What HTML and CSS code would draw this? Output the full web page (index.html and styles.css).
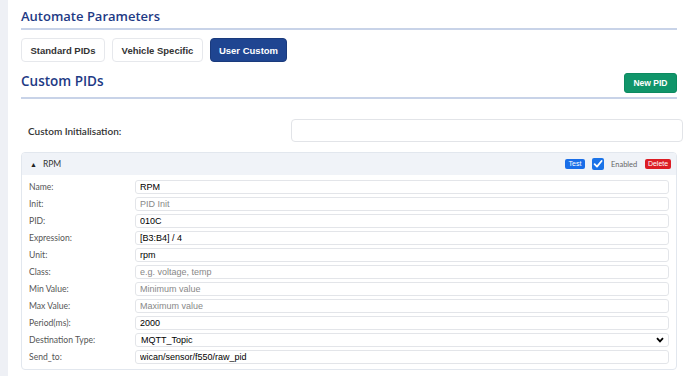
FILE: index.html
```html
<!DOCTYPE html>
<html>
<head>
<meta charset="utf-8">
<link rel="stylesheet" href="styles.css">
</head>
<body>
<div class="page">
  <h1 class="title">Automate Parameters</h1>
  <div class="tabs">
    <button class="tab">Standard PIDs</button>
    <button class="tab">Vehicle Specific</button>
    <button class="tab active">User Custom</button>
  </div>
  <div class="section-head">
    <h2 class="title2">Custom PIDs</h2>
    <button class="btn-new">New PID</button>
  </div>
  <div class="init-row">
    <label class="init-label">Custom Initialisation:</label>
    <input class="init-input" type="text">
  </div>
  <div class="card">
    <div class="card-head">
      <span class="caret">&#9650;</span>
      <span class="card-name">RPM</span>
      <span class="spacer"></span>
      <button class="btn-test">Test</button>
      <span class="check"><svg width="12" height="12" viewBox="0 0 12 12"><rect width="12" height="12" rx="2" fill="#1a73e8"/><path d="M2.6 6.2 L5 8.6 L9.6 3" stroke="#fff" stroke-width="1.8" fill="none" stroke-linecap="round" stroke-linejoin="round"/></svg></span>
      <span class="enabled">Enabled</span>
      <button class="btn-del">Delete</button>
    </div>
    <div class="card-body">
      <div class="row"><label>Name:</label><input type="text" value="RPM"></div>
      <div class="row"><label>Init:</label><input type="text" placeholder="PID Init"></div>
      <div class="row"><label>PID:</label><input type="text" value="010C"></div>
      <div class="row"><label>Expression:</label><input type="text" value="[B3:B4] / 4"></div>
      <div class="row"><label>Unit:</label><input type="text" value="rpm"></div>
      <div class="row"><label>Class:</label><input type="text" placeholder="e.g. voltage, temp"></div>
      <div class="row"><label>Min Value:</label><input type="text" placeholder="Minimum value"></div>
      <div class="row"><label>Max Value:</label><input type="text" placeholder="Maximum value"></div>
      <div class="row"><label>Period(ms):</label><input type="text" value="2000"></div>
      <div class="row"><label>Destination Type:</label>
        <div class="select"><span>MQTT_Topic</span><svg width="8" height="6" viewBox="0 0 8 6"><path d="M1 1.2 L4 4.4 L7 1.2" stroke="#000" stroke-width="1.8" fill="none"/></svg></div>
      </div>
      <div class="row"><label>Send_to:</label><input type="text" value="wican/sensor/f550/raw_pid"></div>
    </div>
  </div>
</div>
</body>
</html>
```

FILE: styles.css
```css
* { box-sizing: border-box; }
html, body { margin: 0; padding: 0; }
body {
  background: #eef0f5;
  font-family: "Open Sans", "Liberation Sans", sans-serif;
  width: 689px;
  height: 376px;
  overflow: hidden;
}
.page {
  margin-left: 8px;
  background: #fff;
  height: 376px;
  padding: 6px 12px 0 13px;
}
.title {
  margin: 0;
  font-size: 13px;
  font-weight: 600;
  color: #1e3a85;
  line-height: 20px;
  padding-bottom: 2px;
  border-bottom: 2px solid #c8d3e8;
}
.tabs {
  display: flex;
  gap: 7px;
  margin-top: 8px;
}
.tab {
  height: 24px;
  padding: 0;
  border: 1px solid #e6e8ec;
  border-radius: 4px;
  background: #fff;
  font-family: "Liberation Sans", Arial, sans-serif;
  font-weight: bold;
  font-size: 9.5px;
  color: #333;
  width: 84px;
  white-space: nowrap;
}
.tab:nth-child(2) { width: 91px; }
.tab.active {
  width: 77px;
  background: #1f4591;
  border-color: #1a3a7c;
  color: #fff;
}
.section-head {
  display: flex;
  align-items: flex-end;
  justify-content: space-between;
  margin-top: 9px;
  padding-bottom: 4px;
  border-bottom: 2px solid #c8d3e8;
}
.title2 {
  margin: 0;
  font-size: 13.5px;
  font-weight: 600;
  color: #1e3a85;
  line-height: 20px;
  margin-bottom: 2px;
}
.btn-new {
  width: 53px;
  height: 20px;
  background: #10956a;
  border: 1px solid #0c8a60;
  border-radius: 3px;
  color: #fff;
  font-family: "Liberation Sans", Arial, sans-serif;
  font-weight: bold;
  font-size: 8.5px;
  padding: 0;
}
.init-row {
  display: flex;
  align-items: center;
  justify-content: space-between;
  margin-top: 20px;
  margin-right: -6px;
  padding-left: 7px;
}
.init-label {
  font-family: Lato, "Open Sans", sans-serif;
  font-size: 10px;
  font-weight: 600;
  color: #333;
}
.init-input {
  width: 392px;
  height: 23px;
  border: 1px solid #e2e4e8;
  border-radius: 4px;
}
.card {
  margin-top: 10px;
  border: 1px solid #e2e7ee;
  border-radius: 4px;
  overflow: hidden;
}
.card-head {
  height: 22px;
  background: #f0f3f8;
  display: flex;
  align-items: center;
  padding: 0 5px 0 8px;
  font-family: Lato, "Open Sans", sans-serif;
  font-size: 8.5px;
  color: #333;
}
.caret { font-size: 7px; color: #222; }
.card-name { margin-left: 6px; }
.spacer { flex: 1; }
.btn-test {
  width: 20px;
  height: 10px;
  padding: 0;
  border: none;
  border-radius: 2px;
  background: #1a6ee8;
  color: #fff;
  font-family: "Liberation Sans", Arial, sans-serif;
  font-size: 7px;
  line-height: 10px;
}
.check { display: flex; margin-left: 7px; }
.enabled {
  margin-left: 7px;
  font-size: 7.5px;
  color: #666;
  width: 34px;
}
.btn-del {
  width: 26px;
  height: 10px;
  padding: 0;
  border: none;
  border-radius: 2px;
  background: #dc1d24;
  color: #fff;
  font-family: "Liberation Sans", Arial, sans-serif;
  font-size: 7px;
  line-height: 10px;
}
.card-body {
  padding: 5px 7px 5px 7px;
  display: flex;
  flex-direction: column;
  gap: 3px;
}
.row {
  display: flex;
  align-items: center;
  height: 14px;
}
.row label {
  width: 106px;
  flex: none;
  font-family: Lato, "Open Sans", sans-serif;
  font-size: 8.6px;
  color: #555;
}
.row input, .select {
  width: 535px;
  height: 14px;
  border: 1px solid #e3e5e9;
  border-radius: 3px;
  padding: 0 4px;
  font-family: "Liberation Sans", Arial, sans-serif;
  font-size: 9px;
  color: #000;
  outline: none;
}
.row input::placeholder { color: #888; }
.select {
  display: flex;
  align-items: center;
  justify-content: space-between;
  padding: 0 4px 0 5px;
}
```
